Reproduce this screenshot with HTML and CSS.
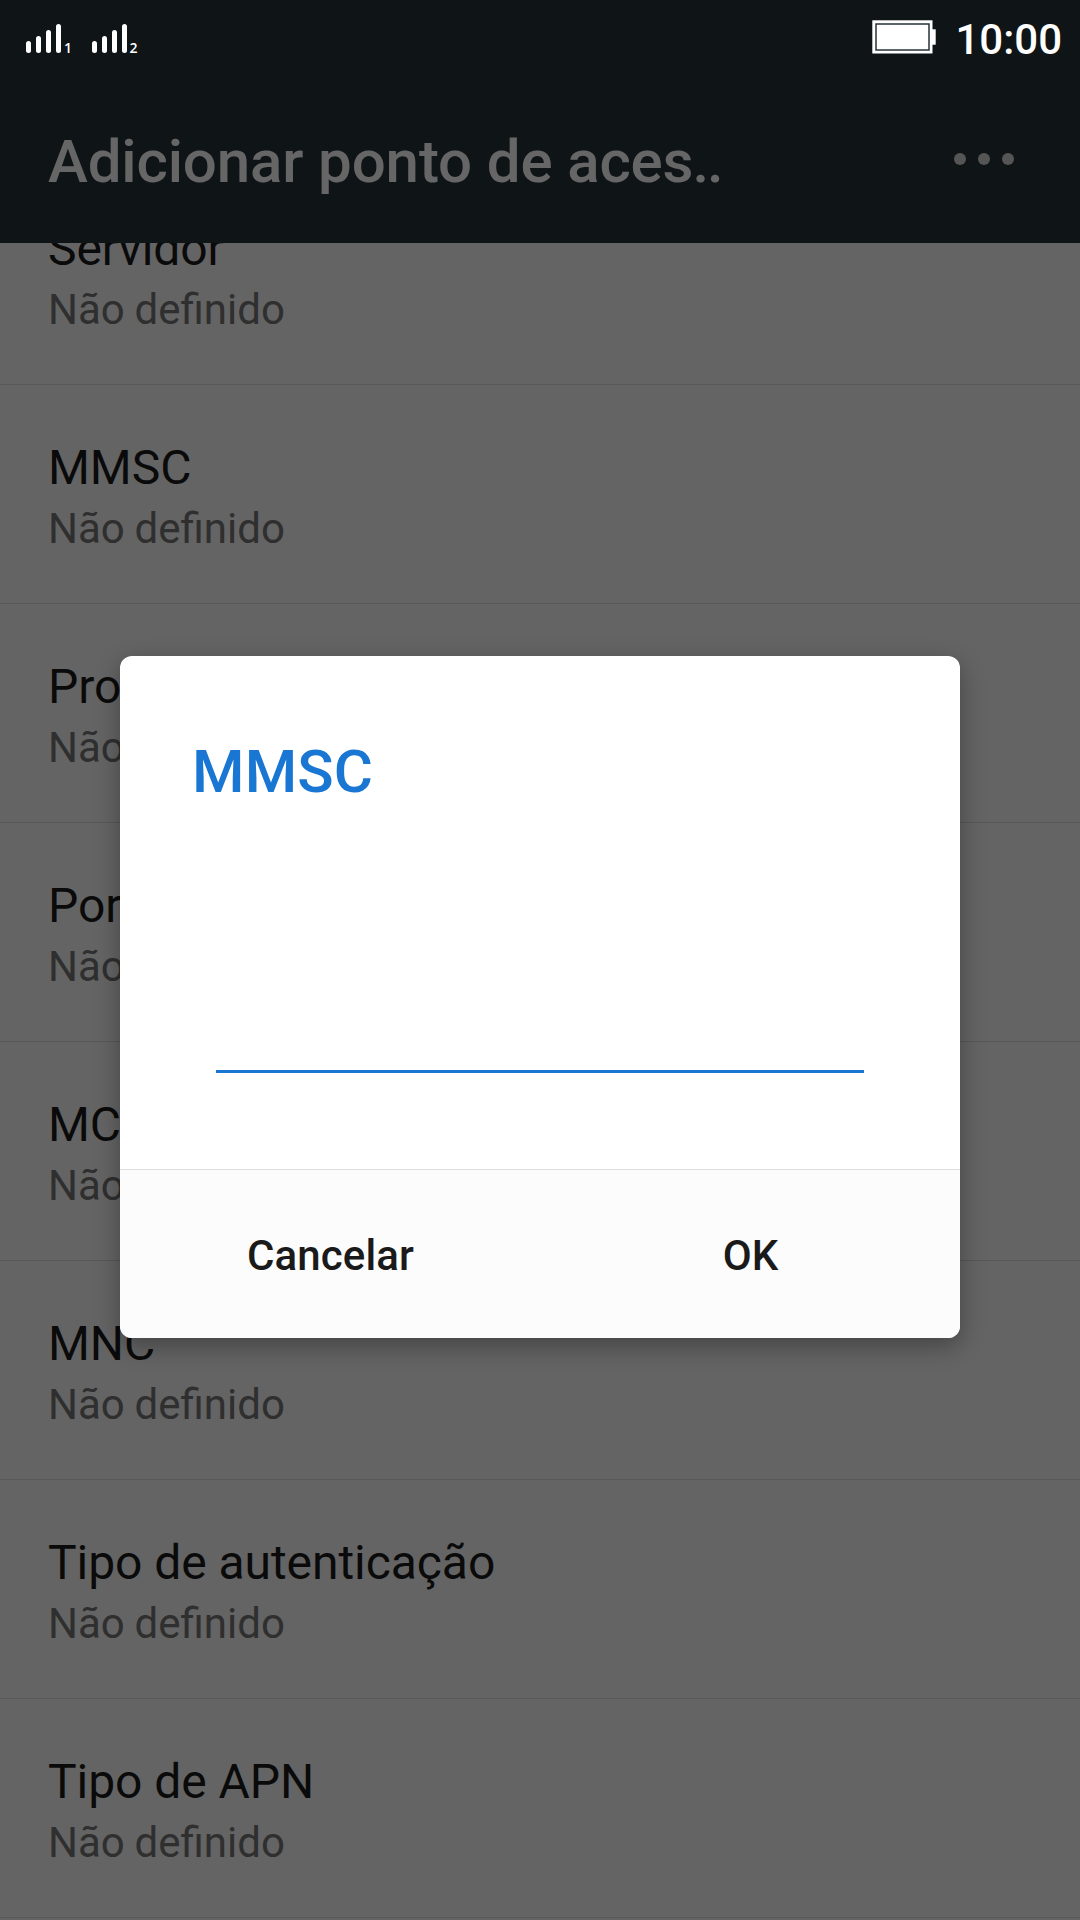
FILE: index.html
```html
<!DOCTYPE html>
<html lang="pt">
<head>
    <meta charset="utf-8">
    <title>Adicionar ponto de acesso</title>
    <link rel="stylesheet" href="styles.css">
</head>
<body>
    <div class="screen">
        <header class="app-bar">
            <h1>Adicionar ponto de aces<span class="puntos">..</span></h1>
            <div class="menu">
                <span></span>
                <span></span>
                <span></span>
            </div>
        </header>
        <main class="viewport">
            <ul class="lista">
                <li><h2>Servidor</h2><p>Não definido</p></li>
                <li><h2>MMSC</h2><p>Não definido</p></li>
                <li><h2>Proxy</h2><p>Não definido</p></li>
                <li><h2>Porta</h2><p>Não definido</p></li>
                <li><h2>MCC</h2><p>Não definido</p></li>
                <li><h2>MNC</h2><p>Não definido</p></li>
                <li><h2>Tipo de autenticação</h2><p>Não definido</p></li>
                <li><h2>Tipo de APN</h2><p>Não definido</p></li>
            </ul>
        </main>
    </div>

    <div class="overlay">
        <div class="dialog">
            <div class="dialog-body">
                <h2>MMSC</h2>
                <input type="text" class="campo">
            </div>
            <div class="dialog-footer">
                <button>Cancelar</button>
                <button>OK</button>
            </div>
        </div>
    </div>

    <div class="status-bar">
        <div class="signals">
            <svg width="50" height="30" viewBox="0 0 50 30" fill="#fff">
                <rect x="0" y="17" width="5" height="12" rx="2.5"/>
                <rect x="10" y="12" width="5" height="17" rx="2.5"/>
                <rect x="20" y="6" width="5" height="23" rx="2.5"/>
                <rect x="30" y="0" width="5" height="29" rx="2.5"/>
                <text x="38" y="29" class="sim">1</text>
            </svg>
            <svg width="50" height="30" viewBox="0 0 50 30" fill="#fff">
                <rect x="0" y="17" width="5" height="12" rx="2.5"/>
                <rect x="10" y="12" width="5" height="17" rx="2.5"/>
                <rect x="20" y="6" width="5" height="23" rx="2.5"/>
                <rect x="30" y="0" width="5" height="29" rx="2.5"/>
                <text x="37.4" y="29" class="sim">2</text>
            </svg>
        </div>
        <div class="status-right">
            <svg width="64" height="34" viewBox="0 0 64 34" fill="#fff">
                <rect x="0.3" y="0.3" width="60.2" height="33.2"/>
                <rect x="60" y="9.3" width="3.7" height="15.4"/>
                <rect x="4" y="4" width="53" height="26" fill="none" stroke="#263238" stroke-width="1.5"/>
            </svg>
            <span class="clock">10:00</span>
        </div>
    </div>
</body>
</html>
```

FILE: styles.css
```css
* {
    box-sizing: border-box;
}
body {
    margin: 0;
    font-family: Roboto, sans-serif;
    background-color: #0f1416;
}
h1, h2, p, ul {
    margin: 0;
    padding: 0;
}
.screen {
    width: 1080px;
    height: 1920px;
    display: flex;
    flex-direction: column;
    overflow: hidden;
    background-color: #fafafa;
}

/* Barra superior */
.app-bar {
    flex: none;
    height: 243px;
    padding: 75px 66px 0 48px;
    display: flex;
    align-items: center;
    justify-content: space-between;
    background-color: #263238;
    color: white;
}
.app-bar h1 {
    font-size: 60px;
    font-weight: 500;
    line-height: 72px;
    letter-spacing: -0.13px;
    margin-top: 5px;
}
.puntos {
    margin-left: -1px;
    letter-spacing: -2px;
}
.menu {
    display: flex;
    gap: 12px;
}
.menu span {
    width: 12px;
    height: 12px;
    border-radius: 50%;
    background-color: #d4d4d4;
}

/* Lista de ajustes */
.viewport {
    flex: 1;
    overflow: hidden;
}
.lista {
    list-style: none;
    margin-top: -77px;
}
.lista li {
    height: 219px;
    padding: 53px 48px 0;
    border-bottom: 1px solid #dcdcdc;
}
.lista h2 {
    font-size: 48px;
    font-weight: 400;
    line-height: 60px;
    letter-spacing: -0.06px;
    color: #1a1a1a;
}
.lista p {
    margin-top: 4px;
    font-size: 42px;
    line-height: 54px;
    word-spacing: -0.6px;
    color: #757575;
}

/* Dialogo */
.overlay {
    position: absolute;
    top: 0;
    left: 0;
    width: 1080px;
    height: 1920px;
    padding-top: 656px;
    background-color: rgba(0, 0, 0, 0.6);
}
.dialog {
    width: 840px;
    height: 682px;
    margin: 0 auto;
    display: flex;
    flex-direction: column;
    border-radius: 12px;
    overflow: hidden;
    background-color: white;
    box-shadow: 0 8px 24px rgba(0, 0, 0, 0.32);
}
.dialog-body {
    flex: 1;
    padding: 80px 96px 0 72px;
}
.dialog-body h2 {
    font-size: 60px;
    font-weight: 500;
    line-height: 72px;
    letter-spacing: 0.2px;
    color: #1976d2;
}
.campo {
    display: block;
    width: 648px;
    height: 96px;
    margin: 169px 0 0 24px;
    padding: 0;
    border: none;
    border-bottom: 3px solid #1976d2;
    font-size: 48px;
    outline: none;
}
.dialog-footer {
    height: 169px;
    display: flex;
    border-top: 1px solid #dedede;
    background-color: #fcfcfc;
}
.dialog-footer button {
    flex: 1;
    padding: 2px 0 0 1px;
    border: none;
    background: none;
    font-family: inherit;
    font-size: 42px;
    font-weight: 500;
    letter-spacing: 0.1px;
    color: #1a1a1a;
}

/* Barra de estado, encima del overlay */
.status-bar {
    position: absolute;
    top: 0;
    left: 0;
    width: 1080px;
    height: 75px;
    padding: 0 18px 0 26px;
    display: flex;
    justify-content: space-between;
    color: white;
}
.signals {
    display: flex;
    gap: 16px;
    padding-top: 24px;
}
.signals svg {
    overflow: visible;
}
.sim {
    font-family: "Open Sans", sans-serif;
    font-size: 14px;
    font-weight: 600;
}
.status-right {
    display: flex;
    gap: 19px;
    padding-top: 20px;
}
.clock {
    font-size: 42px;
    font-weight: 500;
    line-height: 40px;
}
```
